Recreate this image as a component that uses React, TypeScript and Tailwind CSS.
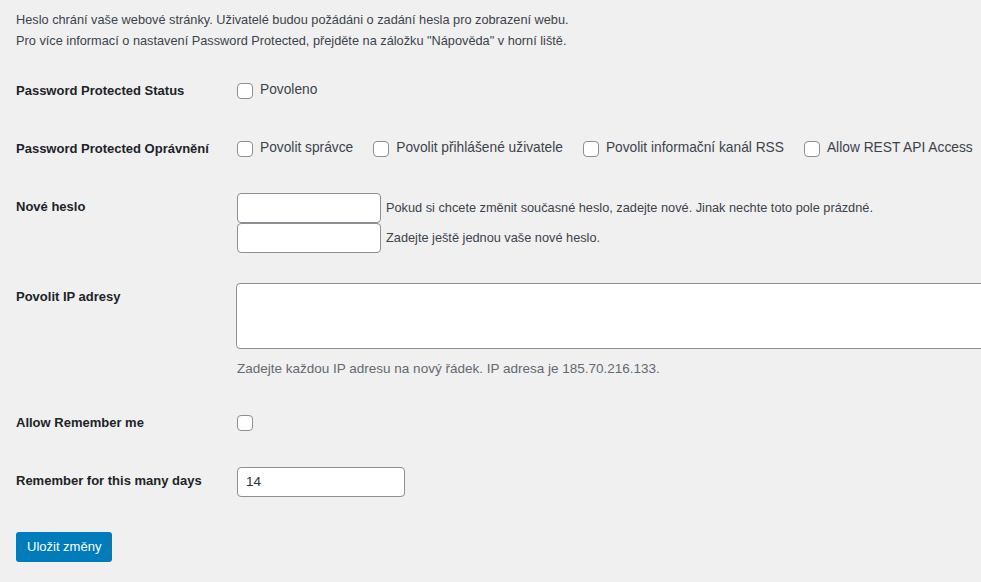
import React from "react";

function Checkbox() {
  return <span className="inline-block w-4 h-4 shrink-0 rounded-[4px] border border-[#8c8f94] bg-white" />;
}

function Row({ label, children }: { label: string; children: React.ReactNode }) {
  return (
    <div className="flex">
      <div className="w-[210px] shrink-0 pt-[20px] pr-[10px] pb-[20px] text-[13px] leading-[18px] font-semibold text-[#1d2327] whitespace-nowrap">
        {label}
      </div>
      <div className="py-[15px] pl-[11px] pr-[10px]">{children}</div>
    </div>
  );
}

export default function App() {
  const perms = ["Povolit správce", "Povolit přihlášené uživatele", "Povolit informační kanál RSS", "Allow REST API Access"];

  return (
    <div
      className="w-[981px] h-[582px] overflow-hidden bg-[#f0f0f1] text-[#3c434a] px-[16px]"
      style={{ fontFamily: '"Liberation Sans", Arial, sans-serif' }}
    >
      {/* intro */}
      <div className="pt-[9px] text-[12.75px] leading-[21px]">
        <p>Heslo chrání vaše webové stránky. Uživatelé budou požádáni o zadání hesla pro zobrazení webu.</p>
        <p>Pro více informací o nastavení Password Protected, přejděte na záložku "Nápověda" v horní liště.</p>
      </div>

      <div className="mt-[10.5px]">
        <Row label="Password Protected Status">
          <label className="flex items-center h-[28px] gap-[7px] text-[13.75px]">
            <Checkbox />
            <span>Povoleno</span>
          </label>
        </Row>

        <Row label="Password Protected Oprávnění">
          <div className="flex items-center h-[28px] text-[13.75px] whitespace-nowrap">
            {perms.map((p) => (
              <label key={p} className="flex items-center gap-[7px] mr-[20px]">
                <Checkbox />
                <span>{p}</span>
              </label>
            ))}
          </div>
        </Row>

        <Row label="Nové heslo">
          <div className="flex flex-col text-[12.75px] whitespace-nowrap">
            <div className="flex items-center gap-[5px]">
              <input type="password" className="w-[144px] h-[30px] rounded-[4px] border border-[#8c8f94] bg-white" />
              <span>Pokud si chcete změnit současné heslo, zadejte nové. Jinak nechte toto pole prázdné.</span>
            </div>
            <div className="flex items-center gap-[5px]">
              <input type="password" className="w-[144px] h-[30px] rounded-[4px] border border-[#8c8f94] bg-white" />
              <span>Zadejte ještě jednou vaše nové heslo.</span>
            </div>
          </div>
        </Row>

        <Row label="Povolit IP adresy">
          <textarea className="block -ml-[1px] w-[800px] h-[66px] rounded-[4px] border border-[#8c8f94] bg-white resize-none" />
          <p className="mt-[10px] text-[13.5px] leading-[20px] text-[#646970] whitespace-nowrap">
            Zadejte každou IP adresu na nový řádek. IP adresa je 185.70.216.133.
          </p>
        </Row>

        <Row label="Allow Remember me">
          <div className="flex items-center h-[28px]">
            <Checkbox />
          </div>
        </Row>

        <Row label="Remember for this many days">
          <input
            type="text"
            defaultValue="14"
            className="w-[168px] h-[30px] px-[8px] rounded-[4px] border border-[#8c8f94] bg-white text-[13.5px] text-[#2c3338]"
          />
        </Row>
      </div>

      <button className="mt-[20px] h-[30px] px-[11px] rounded-[3px] bg-[#007cba] text-white text-[13px]">
        Uložit změny
      </button>
    </div>
  );
}
